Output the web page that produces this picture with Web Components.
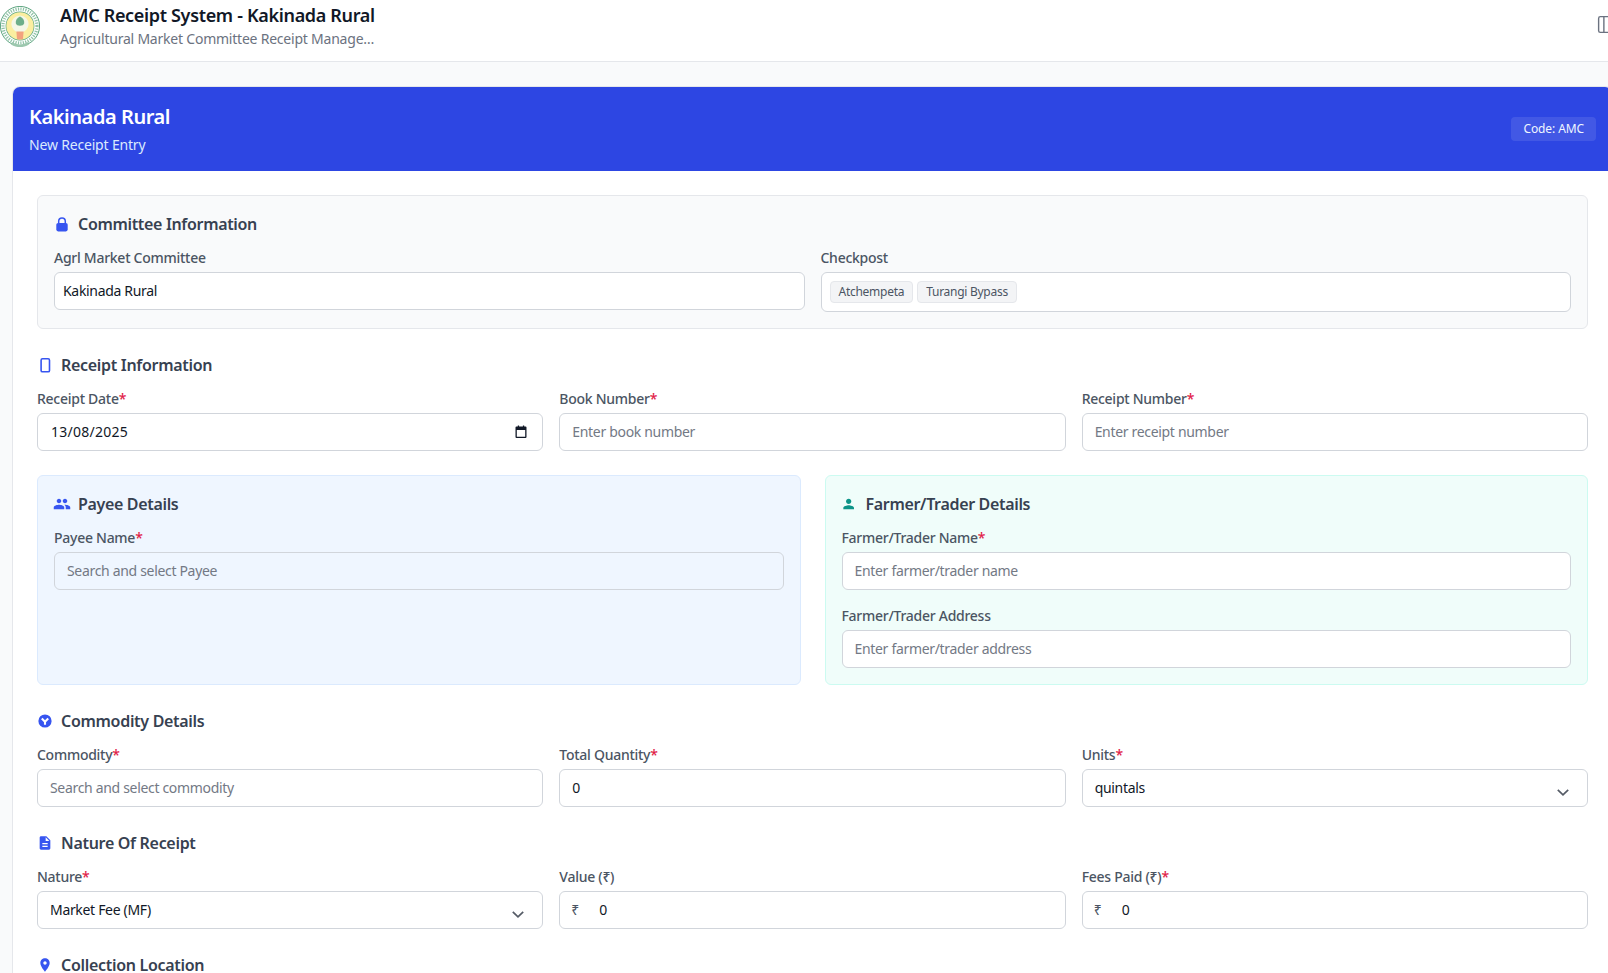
<!DOCTYPE html>
<html lang="en">
<head>
<meta charset="utf-8">
<title>AMC Receipt System</title>
<style>
  html, body { margin: 0; height: 100%; overflow: hidden; background: #f9fafb; }
  body { font-family: "Noto Sans", "Liberation Sans", sans-serif; color: #111827; }
</style>
</head>
<body>

<app-header title="AMC Receipt System - Kakinada Rural" subtitle="Agricultural Market Committee Receipt Manage…"></app-header>

<receipt-card>
  <card-banner title="Kakinada Rural" subtitle="New Receipt Entry" code="Code: AMC"></card-banner>

  <form-box tone="gray" heading="Committee Information" icon="lock">
    <field-grid cols="2">
      <form-field label="Agrl Market Committee" value="Kakinada Rural" tight></form-field>
      <form-field label="Checkpost" tight>
        <check-chip>Atchempeta</check-chip>
        <check-chip>Turangi Bypass</check-chip>
      </form-field>
    </field-grid>
  </form-box>

  <form-section heading="Receipt Information" icon="receipt">
    <field-grid cols="3">
      <form-field label="Receipt Date" required value="13/08/2025" kind="date"></form-field>
      <form-field label="Book Number" required placeholder="Enter book number"></form-field>
      <form-field label="Receipt Number" required placeholder="Enter receipt number"></form-field>
    </field-grid>
  </form-section>

  <field-grid cols="2" wide>
    <form-box tone="blue" heading="Payee Details" icon="group">
      <form-field label="Payee Name" required placeholder="Search and select Payee" clear></form-field>
    </form-box>
    <form-box tone="teal" heading="Farmer/Trader Details" icon="person">
      <form-field label="Farmer/Trader Name" required placeholder="Enter farmer/trader name"></form-field>
      <form-field label="Farmer/Trader Address" placeholder="Enter farmer/trader address"></form-field>
    </form-box>
  </field-grid>

  <form-section heading="Commodity Details" icon="commodity">
    <field-grid cols="3">
      <form-field label="Commodity" required placeholder="Search and select commodity"></form-field>
      <form-field label="Total Quantity" required value="0"></form-field>
      <form-field label="Units" required value="quintals" kind="select"></form-field>
    </field-grid>
  </form-section>

  <form-section heading="Nature Of Receipt" icon="doc">
    <field-grid cols="3">
      <form-field label="Nature" required value="Market Fee (MF)" kind="select"></form-field>
      <form-field label="Value (₹)" value="0" kind="money"></form-field>
      <form-field label="Fees Paid (₹)" required value="0" kind="money"></form-field>
    </field-grid>
  </form-section>

  <form-section heading="Collection Location" icon="pin"></form-section>
</receipt-card>

<script>
const ICONS = {
  lock: '<svg viewBox="0 0 16 16" width="16" height="16"><path d="M4.7 7.5V5.3a3.3 3.3 0 0 1 6.6 0v2.2" fill="none" stroke="currentColor" stroke-width="1.5"/><rect x="2.3" y="7" width="11.4" height="8.4" rx="1.8" fill="currentColor"/></svg>',
  receipt: '<svg viewBox="0 0 16 16" width="16" height="16"><rect x="4.1" y="1.8" width="8.4" height="13" rx="1.4" fill="none" stroke="currentColor" stroke-width="1.6"/></svg>',
  group: '<svg viewBox="0 0 24 24" width="18" height="18" style="margin:-1px"><path fill="currentColor" d="M16 11c1.66 0 2.99-1.34 2.99-3S17.66 5 16 5c-1.66 0-3 1.34-3 3s1.34 3 3 3zm-8 0c1.66 0 2.99-1.34 2.99-3S9.66 5 8 5C6.34 5 5 6.34 5 8s1.34 3 3 3zm0 2c-2.33 0-7 1.17-7 3.5V19h14v-2.5c0-2.33-4.67-3.5-7-3.5zm8 0c-.29 0-.62.02-.97.05 1.16.84 1.97 1.97 1.97 3.45V19h6v-2.5c0-2.33-4.67-3.5-7-3.5z"/></svg>',
  person: '<svg viewBox="2 0 24 24" width="16" height="16"><path fill="currentColor" d="M12 12c2.21 0 4-1.79 4-4s-1.79-4-4-4-4 1.79-4 4 1.79 4 4 4zm0 2c-2.67 0-8 1.34-8 4v2h16v-2c0-2.66-5.33-4-8-4z"/></svg>',
  commodity: '<svg viewBox="0 0 16 16" width="16" height="16"><circle cx="8" cy="8" r="6.6" fill="currentColor"/><path d="M4.8 5.6 8 8.8l3.2-3.2M8 8.8v3" fill="none" stroke="#fff" stroke-width="2.1"/></svg>',
  doc: '<svg viewBox="0 0 24 24" width="16" height="16"><path fill="currentColor" d="M14 2H6c-1.1 0-1.99.9-1.99 2L4 20c0 1.1.89 2 1.99 2H18c1.1 0 2-.9 2-2V8l-6-6zm2 16H8v-2h8v2zm0-4H8v-2h8v2zm-3-5V3.5L18.5 9H13z"/></svg>',
  pin: '<svg viewBox="0 0 24 24" width="16" height="16"><path fill="currentColor" d="M12 2C8.13 2 5 5.13 5 9c0 5.25 7 13 7 13s7-7.75 7-13c0-3.87-3.13-7-7-7zm0 9.5c-1.38 0-2.5-1.12-2.5-2.5s1.12-2.5 2.5-2.5 2.5 1.12 2.5 2.5-1.12 2.5-2.5 2.5z"/></svg>'
};

class AppHeader extends HTMLElement {
  constructor() {
    super();
    this.attachShadow({ mode: 'open' });
  }
  connectedCallback() {
    this.shadowRoot.innerHTML = `
      <style>
        :host { display: flex; width: 1624px; height: 61px; box-sizing: content-box; background: #fff; border-bottom: 1px solid #e5e7eb; }
        .logo { flex: none; width: 40px; height: 42px; margin: 6px 20px 0 0; }
        .text { flex: none; width: 330px; padding-top: 1px; }
        .title { font-size: 18px; line-height: 28px; font-weight: 600; letter-spacing: -.33px; color: #111827; white-space: nowrap; }
        .sub { font-size: 14px; line-height: 20px; letter-spacing: -.22px; color: #6b7280; white-space: nowrap; }
        .toggle { flex: none; width: 21px; height: 21px; margin: 14px 7px 0 auto; color: #6b7280; }
      </style>
      <svg class="logo" viewBox="0 0 40 42">
        <circle cx="20" cy="20" r="19.6" fill="#fff" stroke="#4a9a70" stroke-width=".9"/>
        <circle cx="20" cy="20" r="17" fill="none" stroke="#8fc2a6" stroke-width="3.2" stroke-dasharray="1.2 1.3"/>
        <circle cx="20" cy="20" r="14.4" fill="#5ea882"/>
        <circle cx="20" cy="20" r="13.7" fill="#fbeea0"/>
        <circle cx="20" cy="18" r="8.6" fill="#f3f7e8"/>
        <path d="M20 10.5c3 1.3 4.6 3.8 4.2 6.8-.3 1.7-2.2 2.5-4.2 2.5s-3.9-.8-4.2-2.5c-.4-3 1.2-5.5 4.2-6.8z" fill="#6cae8a"/>
        <path d="M16.4 25.5h7.2l-.6 7.5c-2 .7-4 .7-6 0z" fill="#f2a27e"/>
        <path d="M12 36c5 3.3 11 3.3 16 0l1 2.4c-6 3.500-12 3.500-18 0z" fill="#9cc7ae"/>
      </svg>
      <div class="text">
        <div class="title">${this.getAttribute('title')}</div>
        <div class="sub">${this.getAttribute('subtitle')}</div>
      </div>
      <svg class="toggle" viewBox="0 0 24 24" fill="none" stroke="currentColor" stroke-width="1.6" stroke-linecap="round" stroke-linejoin="round">
        <rect x="3" y="3" width="18" height="18" rx="2"/><path d="M9 3v18"/>
      </svg>`;
    this.removeAttribute('title');
  }
}

class ReceiptCard extends HTMLElement {
  constructor() {
    super();
    this.attachShadow({ mode: 'open' });
    this.shadowRoot.innerHTML = `
      <style>
        :host { display: block; width: 1601px; box-sizing: border-box; margin: 24px 0 0 12px; background: #fff; border: 1px solid #e5e7eb; border-radius: 8px; overflow: hidden; }
        .body { display: flex; flex-direction: column; gap: 24px; padding: 0 24px 24px; }
        ::slotted(card-banner) { margin: 0 -24px; }
      </style>
      <div class="body"><slot></slot></div>`;
  }
}

class CardBanner extends HTMLElement {
  constructor() {
    super();
    this.attachShadow({ mode: 'open' });
  }
  connectedCallback() {
    this.shadowRoot.innerHTML = `
      <style>
        :host { display: flex; justify-content: space-between; align-items: center; padding: 16px; background: #2d46e3; color: #fff; }
        .title { font-size: 20px; line-height: 28px; font-weight: 600; letter-spacing: -.44px; }
        .sub { margin-top: 4px; font-size: 14px; line-height: 20px; letter-spacing: -.18px; color: #dbeafe; }
        .code { padding: 0 12px; font-size: 12px; line-height: 24px; letter-spacing: -.1px; border-radius: 4px; background: rgba(255,255,255,.1); color: #eff6ff; }
      </style>
      <div>
        <div class="title">${this.getAttribute('title')}</div>
        <div class="sub">${this.getAttribute('subtitle')}</div>
      </div>
      <div class="code">${this.getAttribute('code')}</div>`;
    this.removeAttribute('title');
  }
}

class FormSection extends HTMLElement {
  constructor() {
    super();
    this.attachShadow({ mode: 'open' });
  }
  connectedCallback() {
    this.shadowRoot.innerHTML = `
      <style>
        :host { display: block; }
        .head { display: flex; align-items: center; gap: 8px; margin-bottom: 12px; font-size: 16px; line-height: 24px; font-weight: 600; letter-spacing: -.3px; color: #374151; }
        .icon { display: flex; color: #3755f0; }
      </style>
      <div class="head"><span class="icon">${ICONS[this.getAttribute('icon')]}</span>${this.getAttribute('heading')}</div>
      <slot></slot>`;
  }
}

class FormBox extends HTMLElement {
  constructor() {
    super();
    this.attachShadow({ mode: 'open' });
  }
  connectedCallback() {
    const tone = this.getAttribute('tone');
    const tones = {
      gray: ['#f9fafb', '#e5e7eb', '#3755f0'],
      blue: ['#eff6ff', '#dbeafe', '#3755f0'],
      teal: ['#f0fdfa', '#ccfbf1', '#0d9488']
    };
    const [bg, line, ink] = tones[tone];
    this.shadowRoot.innerHTML = `
      <style>
        :host { display: block; padding: 16px; background: ${bg}; border: 1px solid ${line}; border-radius: 6px; }
        .head { display: flex; align-items: center; gap: 8px; margin-bottom: 12px; font-size: 16px; line-height: 24px; font-weight: 600; letter-spacing: -.33px; color: #374151; }
        .icon { display: flex; color: ${ink}; }
        .stack { display: flex; flex-direction: column; gap: 16px; }
      </style>
      <div class="head"><span class="icon">${ICONS[this.getAttribute('icon')]}</span>${this.getAttribute('heading')}</div>
      <div class="stack"><slot></slot></div>`;
  }
}

class FieldGrid extends HTMLElement {
  constructor() {
    super();
    this.attachShadow({ mode: 'open' });
  }
  connectedCallback() {
    const gap = this.hasAttribute('wide') ? 24 : 16;
    this.shadowRoot.innerHTML = `
      <style>
        :host { display: grid; grid-template-columns: repeat(${this.getAttribute('cols')}, minmax(0, 1fr)); gap: ${gap}px; }
      </style>
      <slot></slot>`;
  }
}

class FormField extends HTMLElement {
  constructor() {
    super();
    this.attachShadow({ mode: 'open' });
  }
  connectedCallback() {
    const kind = this.getAttribute('kind');
    const value = this.getAttribute('value');
    const ph = this.getAttribute('placeholder');
    const star = this.hasAttribute('required') ? '<span class="star">*</span>' : '';
    const tail = {
      date: `<svg class="cal" viewBox="0 0 14 14" width="14" height="14"><path fill="#111827" d="M2.5 1.5h9a1 1 0 0 1 1 1V12a1 1 0 0 1-1 1h-9a1 1 0 0 1-1-1V2.5a1 1 0 0 1 1-1zm.3 3.6v6.6h8.4V5.1z"/><path fill="#111827" d="M3.8.5h1.3v2H3.8zM8.9.5h1.3v2H8.9z"/></svg>`,
      select: `<svg class="chev" viewBox="0 0 12 7" width="12" height="7"><path d="M.8.8 6 5.8 11.2.8" fill="none" stroke="#555b66" stroke-width="1.7"/></svg>`
    }[kind] || '';
    const rupee = kind === 'money' ? '<span class="rupee">₹</span>' : '';
    const content = this.children.length
      ? '<div class="chips"><slot></slot></div>'
      : `<span class="grow ${ph ? 'ph' : ''} ${kind === 'date' ? 'date' : ''}">${value || ph || ''}</span>`;
    this.shadowRoot.innerHTML = `
      <style>
        :host { display: block; }
        label { display: block; margin-bottom: 4px; font-size: 14px; line-height: 20px; font-weight: 500; letter-spacing: -.27px; color: #4b5563; }
        .star { color: #e11d48; }
        .box { display: flex; align-items: center; box-sizing: border-box; min-height: 38px; padding: 0 12px 2px; background: ${this.hasAttribute('clear') ? 'transparent' : '#fff'}; border: 1px solid #d1d5db; border-radius: 6px; font-size: 14px; letter-spacing: -.32px; color: #111827; white-space: nowrap; }
        .tight { padding: 0 8px 2px; }
        .ph { color: #737985; }
        .grow { flex: 1; }
        .date { padding-left: 1px; letter-spacing: .25px; }
        .cal { margin: 2px 2px 0 0; }
        .chev { margin: 10px 6px 0 0; }
        .rupee { width: 27px; margin-left: -1px; margin-right: 1px; flex: none; color: #4b5563; font-size: 14px; }
        .chips { display: flex; gap: 4px; padding: 8px 8px 6px; flex: 1; margin: 0 -8px; letter-spacing: 0; }
      </style>
      <label>${this.getAttribute('label')}${star}</label>
      <div class="box ${this.hasAttribute('tight') ? 'tight' : ''}">
        ${rupee}
        ${content}
        ${tail}
      </div>`;
  }
}

class CheckChip extends HTMLElement {
  constructor() {
    super();
    this.attachShadow({ mode: 'open' });
    this.shadowRoot.innerHTML = `
      <style>
        :host { display: block; padding: 0 8px; font-size: 12px; line-height: 20px; letter-spacing: -.27px; color: #4b5563; background: #f3f4f6; border: 1px solid #e5e7eb; border-radius: 4px; }
      </style>
      <slot></slot>`;
  }
}

customElements.define('app-header', AppHeader);
customElements.define('receipt-card', ReceiptCard);
customElements.define('card-banner', CardBanner);
customElements.define('form-section', FormSection);
customElements.define('form-box', FormBox);
customElements.define('field-grid', FieldGrid);
customElements.define('form-field', FormField);
customElements.define('check-chip', CheckChip);
</script>
</body>
</html>
